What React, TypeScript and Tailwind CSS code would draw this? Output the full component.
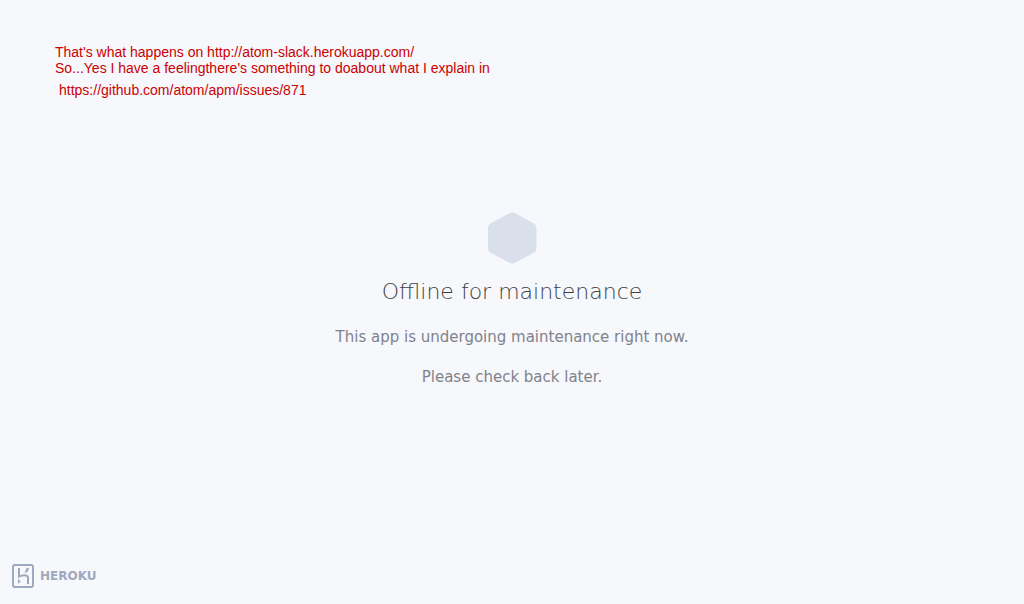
function HerokuMark() {
  return (
    <svg width="22" height="24" viewBox="0 0 22 24" fill="none" aria-hidden="true">
      <rect x="1" y="1" width="20" height="22" rx="2" stroke="#9ea9be" strokeWidth="2" />
      <path d="M7 4v8.700c1.500-.8 3.600-1.400 5.500-1.400 2.500 0 3.500 1.200 3.500 2.700v6" stroke="#9ea9be" strokeWidth="2" />
      <path d="M6 14.800 8.600 17.400 6 20z" fill="#9ea9be" />
      <path d="M14.500 4h2.500c-.3 1.700-1 3.200-2.200 4.500h-2.500c1.200-1.500 1.900-2.900 2.200-4.500z" fill="#9ea9be" />
    </svg>
  );
}

function Hexagon() {
  return (
    <svg width="50" height="52" viewBox="-0.7 0 50 52" aria-hidden="true">
      <path
        d="M21.700 1.300a6 6 0 0 1 5.800 0L46.300 11.400a4.800 4.800 0 0 1 2.500 4.200v20.800a4.800 4.800 0 0 1-2.500 4.200L27.500 50.700a6 6 0 0 1-5.800 0L2.800 40.600A4.800 4.800 0 0 1 .3 36.400V15.600a4.800 4.800 0 0 1 2.500-4.200z"
        fill="#d9e0ec"
      />
    </svg>
  );
}

export default function App() {
  return (
    <div className="flex min-h-screen flex-col bg-[#f7f8fc]">
      <aside className="px-[55px] pt-11 font-['Liberation_Sans',sans-serif] text-sm leading-4 text-[#cc0000]">
        <p>
          That's what happens on <a href="http://atom-slack.herokuapp.com/">http://atom-slack.herokuapp.com/</a>
        </p>
        <p>So...Yes I have a feelingthere's something to doabout what I explain in</p>
        <p className="pl-1 pt-1.5">
          <a href="https://github.com/atom/apm/issues/871">https://github.com/atom/apm/issues/871</a>
        </p>
      </aside>
      <main className="flex grow flex-col items-center justify-center pb-16 text-center font-['DejaVu_Sans',sans-serif]">
        <Hexagon />
        <h1 className="mt-3 text-[22px] leading-8 font-extralight text-[#3f3f44]">Offline for maintenance</h1>
        <p className="mt-[19px] text-[15px] leading-5 text-[#7f828b]">This app is undergoing maintenance right now.</p>
        <p className="mt-5 text-[15px] leading-5 text-[#7f828b]">Please check back later.</p>
      </main>
      <footer className="px-3 pb-4">
        <a href="https://www.heroku.com/" className="inline-flex items-center gap-1.5 align-top font-['DejaVu_Sans',sans-serif] text-xs font-bold text-[#9ea9be]">
          <HerokuMark />
          HEROKU
        </a>
      </footer>
    </div>
  );
}
